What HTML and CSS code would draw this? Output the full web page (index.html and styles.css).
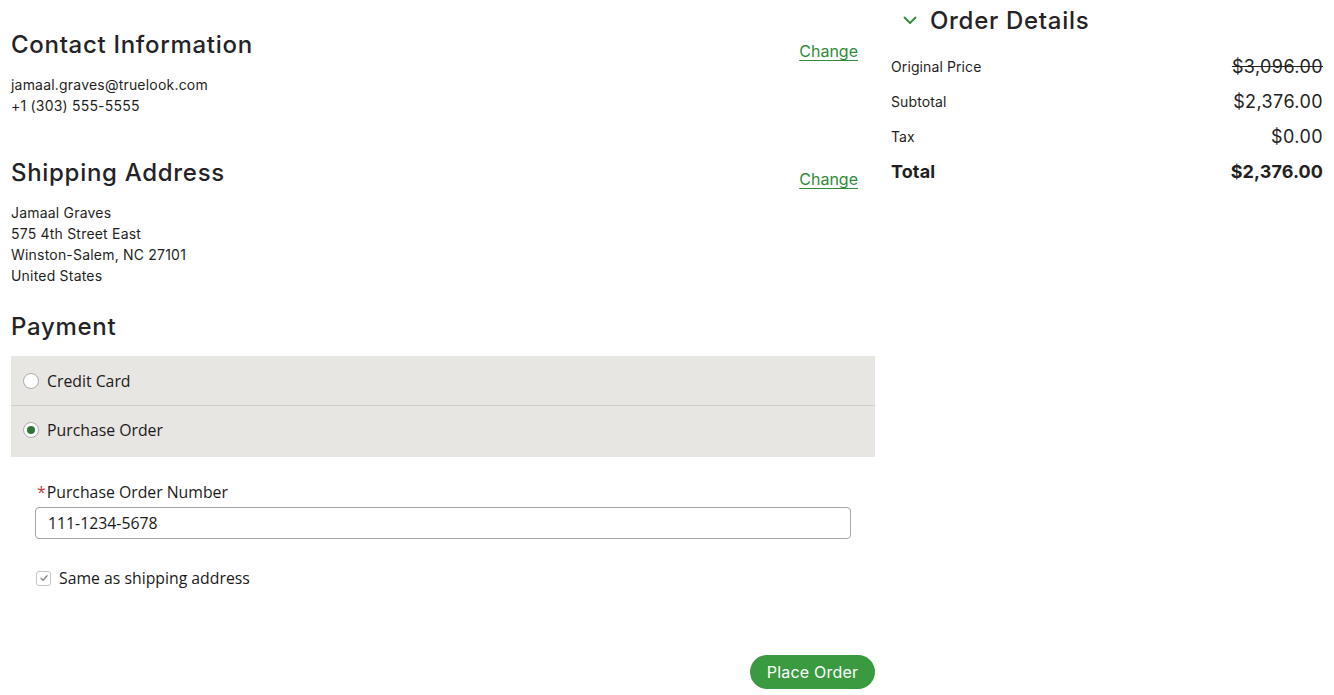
FILE: index.html
```html
<!DOCTYPE html>
<html lang="en">
<head>
<meta charset="utf-8">
<title>Checkout</title>
<link rel="stylesheet" href="styles.css">
</head>
<body>
<div class="page">
  <main class="main-col">
    <section class="section">
      <div class="section-head">
        <h2 class="heading">Contact Information</h2>
        <a class="change" href="#">Change</a>
      </div>
      <div class="info">
        <div>jamaal.graves@truelook.com</div>
        <div>+1 (303) 555-5555</div>
      </div>
    </section>
    <section class="section shipping">
      <div class="section-head">
        <h2 class="heading">Shipping Address</h2>
        <a class="change" href="#">Change</a>
      </div>
      <div class="info">
        <div>Jamaal Graves</div>
        <div>575 4th Street East</div>
        <div>Winston-Salem, NC 27101</div>
        <div>United States</div>
      </div>
    </section>
    <section class="section payment">
      <div class="section-head">
        <h2 class="heading">Payment</h2>
      </div>
      <div class="pay-options">
        <label class="pay-option">
          <span class="radio"></span>
          <span>Credit Card</span>
        </label>
        <label class="pay-option">
          <span class="radio checked"></span>
          <span>Purchase Order</span>
        </label>
      </div>
      <div class="po-form">
        <div class="field-label"><span class="req">*</span>Purchase Order Number</div>
        <div class="input">111-1234-5678</div>
        <label class="check-row">
          <span class="checkbox">
            <svg width="10" height="10" viewBox="0 0 10 10"><path d="M2 5.2 L4.1 7.2 L8 2.8" fill="none" stroke="#8a8886" stroke-width="1.4" stroke-linecap="round" stroke-linejoin="round"/></svg>
          </span>
          <span>Same as shipping address</span>
        </label>
      </div>
      <div class="actions">
        <button class="place-order" type="button">Place Order</button>
      </div>
    </section>
  </main>
  <aside class="side-col">
    <div class="side-head">
      <svg class="chevron" width="14" height="9" viewBox="0 0 14 9"><path d="M1.5 1.5 L7 7 L12.5 1.5" fill="none" stroke="#2e8b3a" stroke-width="1.8" stroke-linecap="round" stroke-linejoin="round"/></svg>
      <h2 class="heading">Order Details</h2>
    </div>
    <div class="summary">
      <div class="row"><span class="lbl">Original Price</span><span class="val strike">$3,096.00</span></div>
      <div class="row"><span class="lbl">Subtotal</span><span class="val">$2,376.00</span></div>
      <div class="row"><span class="lbl">Tax</span><span class="val">$0.00</span></div>
      <div class="row total"><span class="lbl">Total</span><span class="val">$2,376.00</span></div>
    </div>
  </aside>
</div>
</body>
</html>
```
FILE: styles.css
```css
* { box-sizing: border-box; }
html, body { margin: 0; padding: 0; background: #fff; }
body {
  font-family: Inter, "Noto Sans", sans-serif;
  color: #1f1f23;
  font-size: 14px;
}
.page {
  display: flex;
  gap: 16px;
  padding: 0 11px;
}
.main-col {
  width: 864px;
  padding-top: 29px;
  display: flex;
  flex-direction: column;
}
.side-col {
  flex: 1;
}
.section-head {
  display: flex;
  justify-content: space-between;
  align-items: flex-end;
}
.heading {
  margin: 0;
  font-size: 24px;
  line-height: 32px;
  font-weight: 500;
  letter-spacing: 0.7px;
  color: #232328;
}
.change {
  color: #2e8b3a;
  font-size: 16px;
  line-height: 20px;
  margin-right: 17px;
  text-decoration: underline;
  text-underline-offset: 3px;
}
.info {
  margin-top: 13px;
  line-height: 21px;
  font-size: 14px;
  letter-spacing: 0.2px;
}
.shipping { margin-top: 41px; }
.payment { margin-top: 25px; }
.pay-options {
  margin-top: 13px;
  background: #e8e6e3;
  font-family: "Open Sans", Lato, sans-serif;
  font-size: 15.8px;
  color: #1a1a1a;
}
.pay-option {
  display: flex;
  align-items: center;
  gap: 8px;
  height: 49px;
  padding-left: 12px;
}
.pay-option + .pay-option {
  border-top: 1px solid #d1cfcc;
  height: 52px;
  padding-bottom: 4px;
}
.radio {
  width: 16px;
  height: 16px;
  border-radius: 50%;
  border: 1px solid #aeacaa;
  background: #fff;
  display: flex;
  align-items: center;
  justify-content: center;
}
.radio.checked::after {
  content: "";
  width: 8px;
  height: 8px;
  border-radius: 50%;
  background: #2b7a34;
}
.po-form {
  padding: 25px 24px 0 24px;
  font-family: "Open Sans", Lato, sans-serif;
  font-size: 15.8px;
  color: #1a1a1a;
}
.field-label {
  line-height: 20px;
  padding-left: 2px;
}
.req {
  color: #c23934;
  margin-right: 1px;
}
.input {
  margin-top: 5px;
  height: 32px;
  border: 1px solid #a7a5a9;
  border-radius: 4px;
  padding: 0 12px;
  display: flex;
  align-items: center;
  font-size: 15.8px;
  color: #1a1a1a;
}
.check-row {
  margin-top: 29px;
  display: flex;
  align-items: center;
  gap: 8px;
  height: 20px;
  padding-left: 1px;
}
.checkbox {
  width: 15px;
  height: 15px;
  border: 1px solid #c6c4c2;
  border-radius: 3px;
  display: flex;
  align-items: center;
  justify-content: center;
  background: #fff;
}
.actions {
  display: flex;
  justify-content: flex-end;
  margin-top: 67px;
}
.place-order {
  background: #3a9a40;
  color: #fff;
  border: none;
  border-radius: 17px;
  height: 34px;
  width: 125px;
  font-family: Inter, "Noto Sans", sans-serif;
  font-size: 16px;
  letter-spacing: 0.2px;
  cursor: pointer;
}
.side-head {
  display: flex;
  align-items: center;
  gap: 13px;
  padding-left: 12px;
  padding-top: 5px;
}
.chevron { margin-top: -2px; }
.summary {
  margin-top: 12px;
}
.row {
  display: flex;
  justify-content: space-between;
  align-items: center;
  height: 35px;
}
.lbl { font-size: 14px; letter-spacing: 0.1px; }
.val { font-size: 18px; color: #222; letter-spacing: 0.4px; }
.strike { text-decoration: line-through; }
.total .lbl { font-size: 18px; font-weight: 700; }
.total .val { font-weight: 700; letter-spacing: 0.1px; }
```
